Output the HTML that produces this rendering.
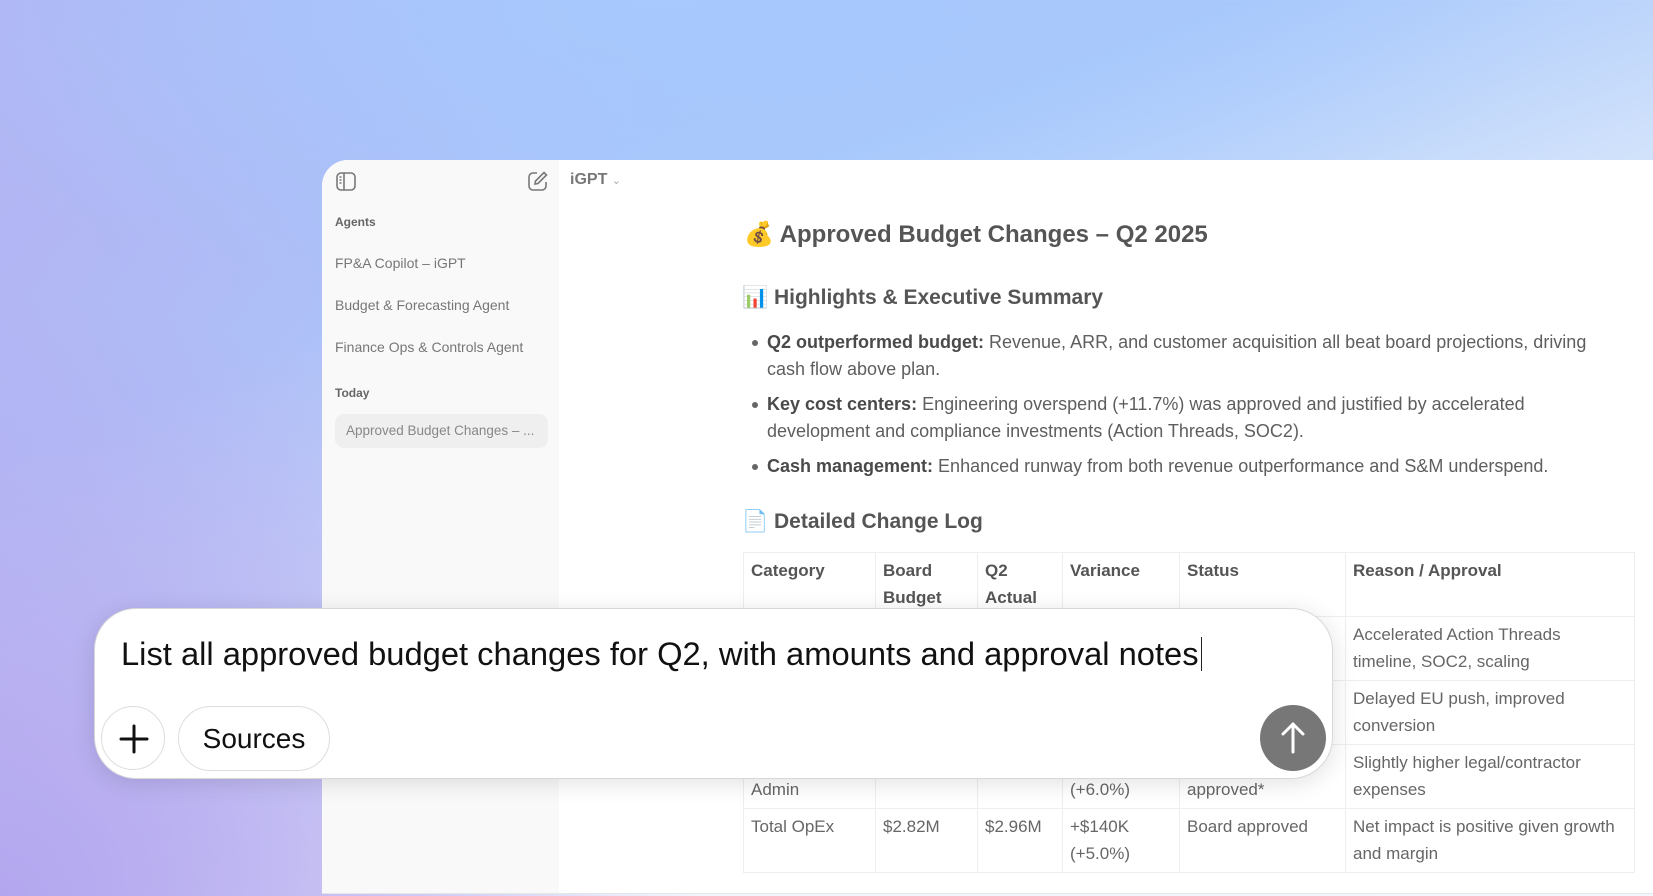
<!DOCTYPE html>
<html><head><meta charset="utf-8"><style>
*{margin:0;padding:0;box-sizing:border-box}
body{width:1653px;height:896px;overflow:hidden;position:relative;font-family:"Liberation Sans",sans-serif;
background:linear-gradient(160deg,#a9b8f6 0%,#a8c8fb 30%,#dbe8fb 55%,#f4f7fd 75%),#aec6fb;}
.bg{position:absolute;inset:0;background:radial-gradient(ellipse 700px 600px at 0% 100%,#b3a6ef 0%,rgba(180,168,240,0) 100%),radial-gradient(ellipse 900px 300px at 40% 0%,#a7c9fd 0%,rgba(167,201,253,0) 100%),linear-gradient(90deg,rgba(185,175,240,.6) 0%,rgba(185,175,240,0) 40%);}
.panel{position:absolute;left:322px;top:160px;width:1400px;height:734px;background:#fff;border-top-left-radius:26px;overflow:hidden;border-bottom:1px solid #e6e6e6}
.side{position:absolute;left:0;top:0;width:237px;height:100%;background:#f9f9f9}
.side .lbl{position:absolute;left:13px;font-size:12px;font-weight:bold;color:#666}
.side .it{position:absolute;left:13px;font-size:14px;color:#777}
.chip{position:absolute;left:13px;top:254px;width:213px;height:34px;background:#efefef;border-radius:9px;font-size:13.5px;color:#888;padding:9px 0 0 11px}
.main{position:absolute;left:237px;top:0;right:0;bottom:0;color:#5a5a5a}
h1{position:absolute;left:185px;top:60px;font-size:24px;font-weight:bold;color:#555;white-space:nowrap}
h2{position:absolute;font-size:21px;font-weight:bold;color:#555;white-space:nowrap}
ul{position:absolute;left:208px;top:169px;width:840px;font-size:18px;line-height:26.5px;color:#5e5e5e;list-style:none}
ul li{position:relative;margin-bottom:9px}
ul li:before{content:"";position:absolute;left:-15px;top:11px;width:6px;height:6px;border-radius:50%;background:#666}
ul b{color:#4a4a4a}
table{position:absolute;left:184px;top:392px;border-collapse:collapse;font-size:17px;line-height:26.5px;color:#666;border:1px solid #eee}
td,th{border:1px solid #eee;vertical-align:top;text-align:left;padding:5px 7px}
th{font-weight:bold;color:#555;height:62px}
td{height:62px}
.input{position:absolute;left:94px;top:608px;width:1239px;height:171px;background:#fff;border:1px solid #d8d8d8;border-radius:42px;box-shadow:0 4px 24px rgba(0,0,0,.12)}
.q{position:absolute;left:26px;top:26px;font-size:32.7px;color:#111;white-space:nowrap}
.q span{display:inline-block;width:1px;height:34px;background:#222;vertical-align:-6px;margin-left:2px}
.plus{position:absolute;left:6px;top:97px;width:64px;height:64px;border:1px solid #ddd;border-radius:50%}
.src{position:absolute;left:83px;top:97px;width:152px;height:65px;border:1px solid #ddd;border-radius:33px;font-size:28px;color:#111;text-align:center;line-height:63px}
.send{position:absolute;left:1165px;top:96px;width:66px;height:66px;border-radius:50%;background:#777}
</style></head><body><div class="bg"></div>
<div class="panel">
 <div class="side">
  <svg style="position:absolute;left:14px;top:12px" width="20" height="19" viewBox="0 0 20 19" fill="none" stroke="#777" stroke-width="1.6"><rect x="1" y="1" width="18" height="17" rx="4"/><line x1="8" y1="1" x2="8" y2="18"/><line x1="3.5" y1="5" x2="5.5" y2="5"/><line x1="3.5" y1="8" x2="5.5" y2="8"/><line x1="3.5" y1="11" x2="5.5" y2="11"/></svg>
  <svg style="position:absolute;left:206px;top:11px" width="20" height="20" viewBox="0 0 20 20" fill="none" stroke="#777" stroke-width="1.6"><path d="M9 2H5a4 4 0 0 0-4 4v9a4 4 0 0 0 4 4h9a4 4 0 0 0 4-4v-4"/><path d="M16 1.5l2.5 2.5L10 12.5 7 13l.5-3z"/></svg>
  <div class="lbl" style="top:55px">Agents</div>
  <div class="it" style="top:95px">FP&amp;A Copilot – iGPT</div>
  <div class="it" style="top:137px">Budget &amp; Forecasting Agent</div>
  <div class="it" style="top:179px">Finance Ops &amp; Controls Agent</div>
  <div class="lbl" style="top:226px">Today</div>
  <div class="chip">Approved Budget Changes – ...</div>
 </div>
 <div class="main">
  <div style="position:absolute;left:11px;top:11px;font-size:16px;font-weight:bold;color:#777">iGPT <span style="font-weight:normal;font-size:11px;color:#aaa">&#8964;</span></div>
  <h1>💰 Approved Budget Changes – Q2 2025</h1>
  <h2 style="left:183px;top:126px">📊 Highlights &amp; Executive Summary</h2>
  <ul>
   <li><b>Q2 outperformed budget:</b> Revenue, ARR, and customer acquisition all beat board projections, driving cash flow above plan.</li>
   <li><b>Key cost centers:</b> Engineering overspend (+11.7%) was approved and justified by accelerated development and compliance investments (Action Threads, SOC2).</li>
   <li><b>Cash management:</b> Enhanced runway from both revenue outperformance and S&amp;M underspend.</li>
  </ul>
  <h2 style="left:183px;top:350px">📄 Detailed Change Log</h2>
  <table>
   <tr><th style="width:132px">Category</th><th style="width:102px">Board<br>Budget</th><th style="width:85px">Q2<br>Actual</th><th style="width:117px">Variance</th><th style="width:166px">Status</th><th style="width:289px">Reason / Approval</th></tr>
   <tr><td></td><td></td><td></td><td></td><td></td><td>Accelerated Action Threads timeline, SOC2, scaling</td></tr>
   <tr><td></td><td></td><td></td><td></td><td></td><td>Delayed EU push, improved conversion</td></tr>
   <tr><td><br>Admin</td><td></td><td></td><td><br>(+6.0%)</td><td><br>approved*</td><td>Slightly higher legal/contractor expenses</td></tr>
   <tr><td>Total OpEx</td><td>$2.82M</td><td>$2.96M</td><td>+$140K<br>(+5.0%)</td><td>Board approved</td><td>Net impact is positive given growth and margin</td></tr>
  </table>
 </div>
</div>
<div class="input">
 <div class="q">List all approved budget changes for Q2, with amounts and approval notes<span></span></div>
 <div class="plus"><svg width="64" height="64" viewBox="0 0 64 64" stroke="#111" stroke-width="3" stroke-linecap="round"><line x1="32" y1="19" x2="32" y2="45"/><line x1="19" y1="32" x2="45" y2="32"/></svg></div>
 <div class="src">Sources</div>
 <div class="send"><svg width="66" height="66" viewBox="0 0 66 66" fill="none" stroke="#fff" stroke-width="3" stroke-linecap="round" stroke-linejoin="round"><line x1="33" y1="19" x2="33" y2="47"/><polyline points="23,29 33,19 43,29"/></svg></div>
</div>
</body></html>
